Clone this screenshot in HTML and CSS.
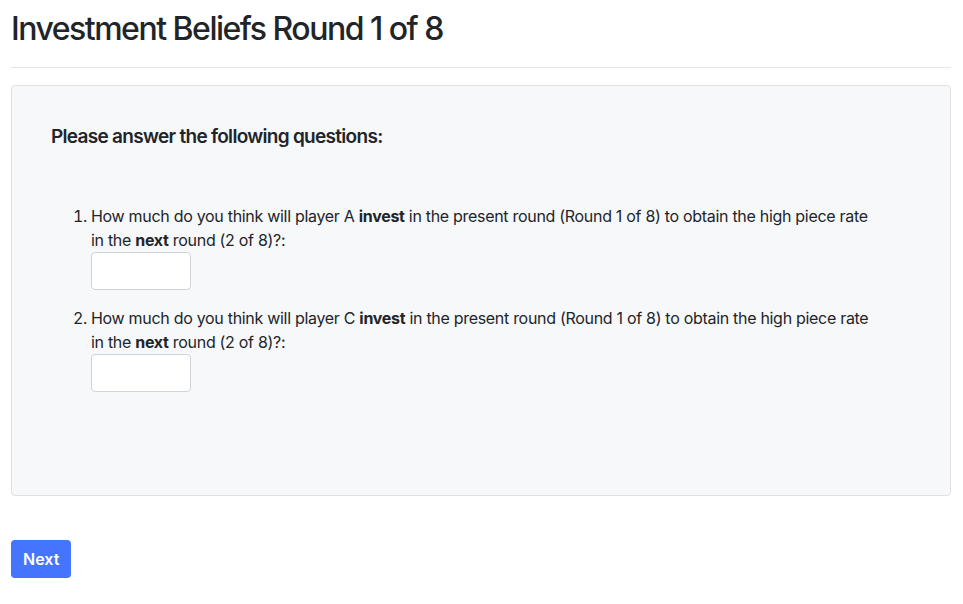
FILE: index.html
```html
<!DOCTYPE html>
<html lang="en">
<head>
<meta charset="utf-8">
<title>Investment Beliefs Round 1 of 8</title>
<link rel="stylesheet" href="styles.css">
</head>
<body>
<div class="container">
  <h2 class="page-title">Investment Beliefs Round 1 of 8</h2>
  <hr class="divider">
  <div class="card">
    <h5 class="card-heading">Please answer the following questions:</h5>
    <ol class="questions">
      <li class="question">
        <div class="q-text">How much do you think will player A <b>invest</b> in the present round (Round 1 of 8) to obtain the high piece rate in the <b>next</b> round (2 of 8)?:</div>
        <input class="q-input" type="text">
      </li>
      <li class="question">
        <div class="q-text">How much do you think will player C <b>invest</b> in the present round (Round 1 of 8) to obtain the high piece rate in the <b>next</b> round (2 of 8)?:</div>
        <input class="q-input" type="text">
      </li>
    </ol>
  </div>
  <button class="btn-next" type="button">Next</button>
</div>
</body>
</html>
```
FILE: styles.css
```css
* { box-sizing: border-box; }
html, body {
  margin: 0;
  padding: 0;
  background: #fff;
}
body {
  font-family: Inter, "Liberation Sans", Arial, sans-serif;
  font-size: 16px;
  line-height: 24px;
  color: #212529;
}
.container {
  padding: 10px 12px 0 11px;
}
.page-title {
  margin: 0;
  font-size: 32px;
  font-weight: 500;
  line-height: 38px;
  letter-spacing: -1.5px;
}
.divider {
  margin: 19px 0 17px;
  border: 0;
  border-top: 1px solid #e5e6e8;
}
.card {
  background: #f7f8fa;
  border: 1px solid #dfe0e3;
  border-radius: 4px;
  padding: 39px 39px 103px;
}
.card-heading {
  margin: 0 0 55px;
  font-size: 19px;
  font-weight: 600;
  line-height: 24px;
  letter-spacing: -0.7px;
}
.questions {
  margin: 0;
  padding-left: 40px;
}
.question {
  margin-bottom: 16px;
  letter-spacing: -0.3px;
}
.question:last-child { margin-bottom: 0; }
.q-text {
  max-width: 785px;
}
.q-input {
  display: block;
  width: 100px;
  height: 38px;
  margin: 0;
  padding: 6px 12px;
  border: 1px solid #ced4da;
  border-radius: 4px;
  background: #fff;
  font: inherit;
}
.btn-next {
  margin-top: 44px;
  height: 38px;
  padding: 0 12px;
  border: 0;
  border-radius: 4px;
  background: #4574ff;
  color: #fff;
  font-family: inherit;
  font-size: 16px;
  font-weight: 600;
}
```
